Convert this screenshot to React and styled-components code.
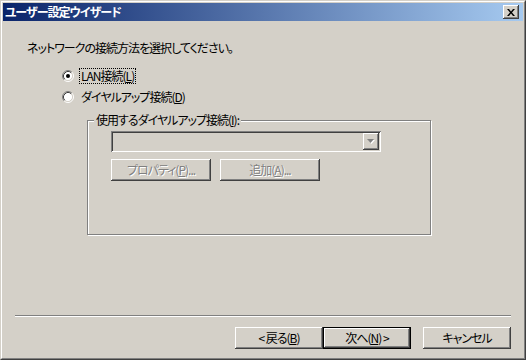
import React from 'react';
import styled, { createGlobalStyle } from 'styled-components';

const face = '#d4d0c8';

const GlobalStyle = createGlobalStyle`
  html, body {
    margin: 0;
    padding: 0;
    background: ${face};
  }
  body {
    font-family: "Noto Sans CJK JP", "Noto Sans", sans-serif;
    font-size: 12px;
    font-feature-settings: "palt";
    letter-spacing: -1px;
    color: #000;
  }
`;

const raised = `
  box-shadow: inset -1px -1px #404040, inset 1px 1px #fff,
    inset -2px -2px #808080, inset 2px 2px ${face};
`;

const Window = styled.div`
  width: 526px;
  height: 360px;
  box-sizing: border-box;
  border: 1px solid;
  border-color: ${face} #404040 #404040 ${face};
  background: ${face};
`;

const Frame = styled.div`
  height: 100%;
  box-sizing: border-box;
  border: 1px solid;
  border-color: #fff #808080 #808080 #fff;
  padding: 1px;
  display: flex;
  flex-direction: column;
`;

const TitleBar = styled.div`
  height: 18px;
  flex: none;
  display: flex;
  align-items: center;
  justify-content: space-between;
  padding: 0 4px 0 2px;
  background: linear-gradient(to right, #0a246a, #a6caf0);
  color: #fff;
  font-weight: bold;
  line-height: 14px;
`;

const CloseButton = styled.div`
  width: 16px;
  height: 14px;
  display: flex;
  align-items: center;
  justify-content: center;
  background: ${face};
  ${raised}
`;

const Body = styled.div`
  flex: 1;
  display: flex;
  flex-direction: column;
`;

const Main = styled.div`
  flex: 1;
  padding: 20px 0 0 24px;
`;

const Prompt = styled.p`
  margin: 0;
  line-height: 14px;
`;

const RadioList = styled.div`
  margin: 14px 0 0 35px;
  display: flex;
  flex-direction: column;
  gap: 7px;
`;

const RadioRow = styled.div`
  height: 14px;
  display: flex;
  align-items: center;
  gap: 5px;
`;

const RadioLabel = styled.span`
  line-height: 14px;
  padding: 0 1px;
  border: 1px dotted ${p => (p.$focused ? '#000' : 'transparent')};
`;

const GroupBox = styled.div`
  position: relative;
  margin: 16px 0 0 60px;
  width: 344px;
  box-sizing: border-box;
  border: 1px solid #808080;
  box-shadow: inset 1px 1px #fff, 1px 1px #fff;
  padding: 10px 0 53px 23px;
`;

const GroupLabel = styled.span`
  position: absolute;
  top: -8px;
  left: 6px;
  padding: 0 2px;
  line-height: 14px;
  background: ${face};
`;

const ComboBox = styled.div`
  width: 270px;
  height: 21px;
  box-sizing: border-box;
  padding: 2px;
  display: flex;
  justify-content: flex-end;
  box-shadow: inset 1px 1px #808080, inset -1px -1px #fff,
    inset 2px 2px #404040, inset -2px -2px ${face};
`;

const DropButton = styled.div`
  width: 16px;
  height: 17px;
  display: flex;
  align-items: center;
  justify-content: center;
  ${raised}
`;

const ButtonRow = styled.div`
  display: flex;
  gap: 9px;
  margin-top: 7px;
`;

const PushButton = styled.button`
  width: ${p => p.$width}px;
  height: 22px;
  margin: 0;
  padding: 0;
  border: none;
  background: ${face};
  font: inherit;
  letter-spacing: inherit;
  line-height: 14px;
  color: ${p => (p.disabled ? '#808080' : '#000')};
  text-shadow: ${p => (p.disabled ? '1px 1px 0 #fff' : 'none')};
  ${p =>
    p.$default
      ? `box-shadow: inset 0 0 0 1px #000, inset -2px -2px #404040, inset 2px 2px #fff,
          inset -3px -3px #808080, inset 3px 3px ${face};`
      : raised}

  u {
    text-decoration-thickness: 1px;
    text-underline-offset: 1px;
  }
`;

const Footer = styled.div`
  flex: none;
`;

const Separator = styled.div`
  margin: 0 12px;
  border-top: 1px solid #808080;
  border-bottom: 1px solid #fff;
`;

const FooterButtons = styled.div`
  display: flex;
  justify-content: flex-end;
  padding: 10px 12px 8px 0;

  & > :last-child {
    margin-left: 12px;
  }
`;

const Radio = ({ checked }) => (
  <svg width="12" height="12" viewBox="0 0 12 12">
    <circle cx="6" cy="6" r="4.5" fill="#fff" />
    <path d="M2.11 9.89 A5.5 5.5 0 0 1 9.89 2.11" stroke="#808080" fill="none" />
    <path d="M2.82 9.18 A4.5 4.5 0 0 1 9.18 2.82" stroke="#404040" fill="none" />
    <path d="M9.89 2.11 A5.5 5.5 0 0 1 2.11 9.89" stroke="#fff" fill="none" />
    <path d="M9.18 2.82 A4.5 4.5 0 0 1 2.82 9.18" stroke={face} fill="none" />
    {checked && <circle cx="6" cy="6" r="2" fill="#000" />}
  </svg>
);

const CloseGlyph = () => (
  <svg width="8" height="7" viewBox="0 0 8 7">
    <path d="M0 0h2l2 2.4 2-2.4h2l-3 3.5 3 3.5h-2l-2-2.4-2 2.4h-2l3-3.5z" fill="#000" />
  </svg>
);

const DropArrow = () => (
  <svg width="8" height="5" viewBox="0 0 8 5">
    <path d="M1 1h7l-3.5 4z" fill="#fff" />
    <path d="M0 0h7l-3.5 4z" fill="#808080" />
  </svg>
);

export default function App() {
  return (
    <>
      <GlobalStyle />
      <Window>
        <Frame>
          <TitleBar>
            <span>ユーザー設定ウイザード</span>
            <CloseButton>
              <CloseGlyph />
            </CloseButton>
          </TitleBar>
          <Body>
            <Main>
              <Prompt>ネットワークの接続方法を選択してください。</Prompt>
              <RadioList>
                <RadioRow>
                  <Radio checked />
                  <RadioLabel $focused>
                    LAN接続(<u>L</u>)
                  </RadioLabel>
                </RadioRow>
                <RadioRow>
                  <Radio />
                  <RadioLabel>
                    ダイヤルアップ接続(<u>D</u>)
                  </RadioLabel>
                </RadioRow>
              </RadioList>
              <GroupBox>
                <GroupLabel>
                  使用するダイヤルアップ接続(<u>I</u>):
                </GroupLabel>
                <ComboBox>
                  <DropButton>
                    <DropArrow />
                  </DropButton>
                </ComboBox>
                <ButtonRow>
                  <PushButton $width={100} disabled>
                    プロパティ(<u>P</u>)...
                  </PushButton>
                  <PushButton $width={100} disabled>
                    追加(<u>A</u>)...
                  </PushButton>
                </ButtonRow>
              </GroupBox>
            </Main>
            <Footer>
              <Separator />
              <FooterButtons>
                <PushButton $width={88}>
                  &lt; 戻る(<u>B</u>)
                </PushButton>
                <PushButton $width={88} $default>
                  次へ(<u>N</u>) &gt;
                </PushButton>
                <PushButton $width={88}>キャンセル</PushButton>
              </FooterButtons>
            </Footer>
          </Body>
        </Frame>
      </Window>
    </>
  );
}
